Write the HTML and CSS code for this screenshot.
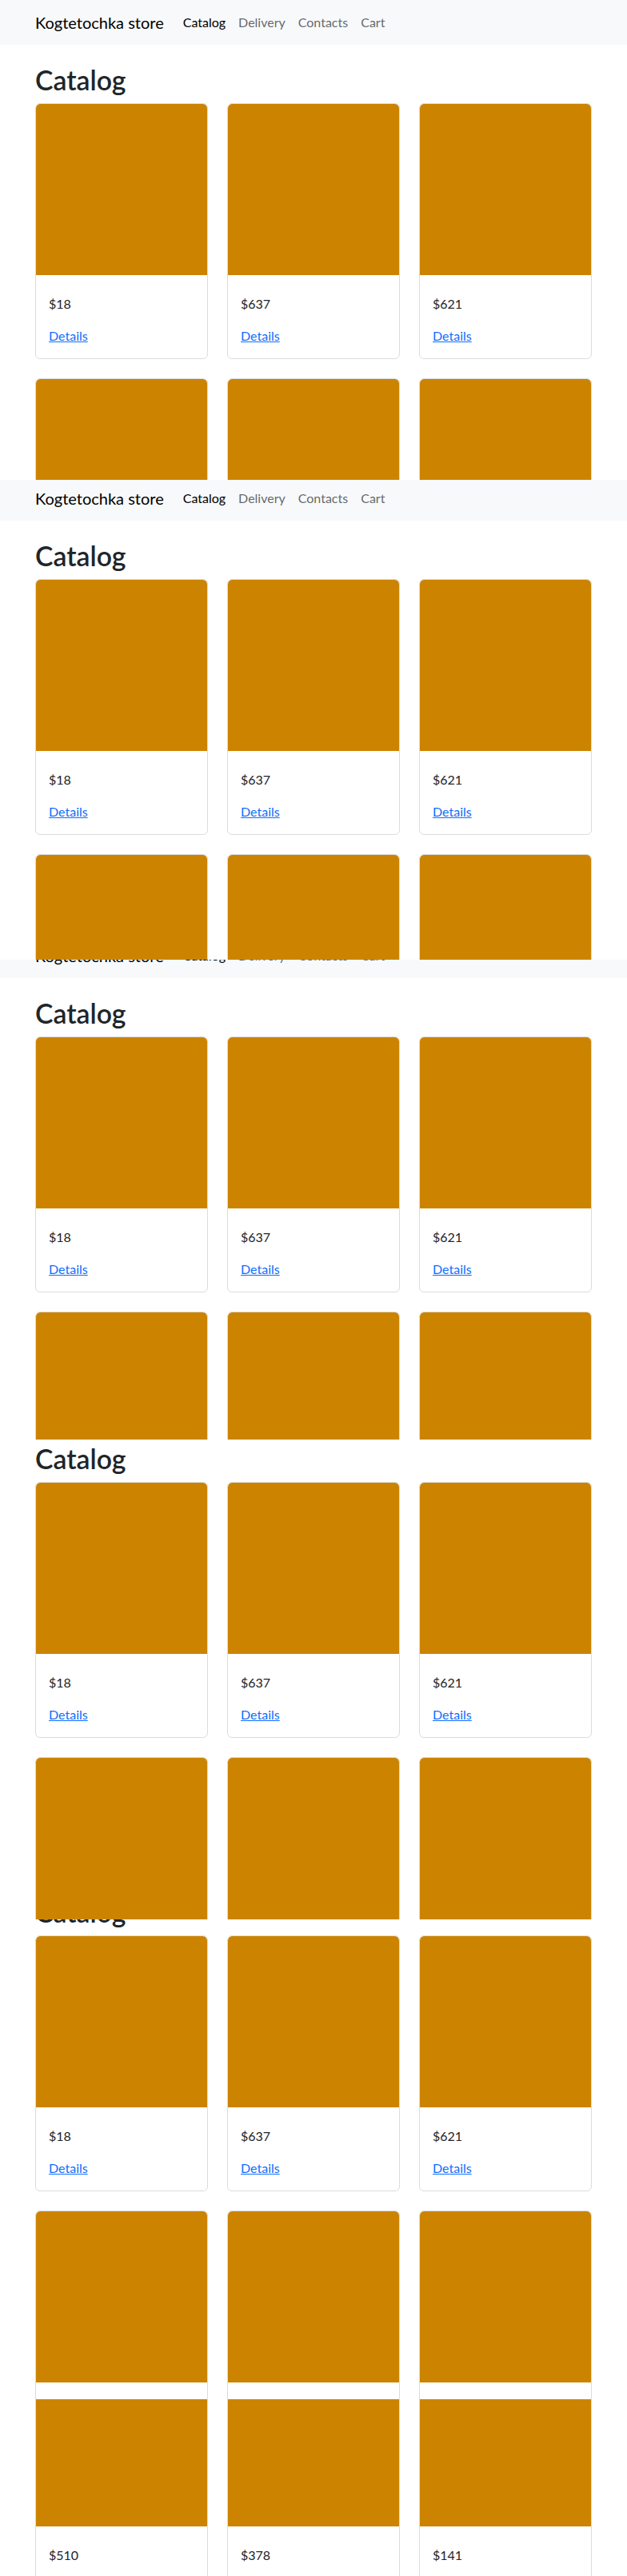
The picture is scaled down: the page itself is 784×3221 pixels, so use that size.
FILE: index.html
```html
<!DOCTYPE html>
<html lang="en">
<head>
<meta charset="utf-8">
<title>Kogtetochka store</title>
<link rel="stylesheet" href="styles.css">
</head>
<body>

<section class="tile">
  <div class="page scroll-0">
    <nav class="navbar"><div class="container nav-inner">
      <a class="brand" href="#">Kogtetochka store</a>
      <ul class="nav"><li><a class="nav-link active" href="#">Catalog</a></li><li><a class="nav-link" href="#">Delivery</a></li><li><a class="nav-link" href="#">Contacts</a></li><li><a class="nav-link" href="#">Cart</a></li></ul>
    </div></nav>
    <main class="container main">
      <h1 class="title">Catalog</h1>
      <div class="grid">
        <div class="card"><div class="card-img"></div><div class="card-body"><p class="price">$18</p><a class="details" href="#">Details</a></div></div>
        <div class="card"><div class="card-img"></div><div class="card-body"><p class="price">$637</p><a class="details" href="#">Details</a></div></div>
        <div class="card"><div class="card-img"></div><div class="card-body"><p class="price">$621</p><a class="details" href="#">Details</a></div></div>
        <div class="card"><div class="card-img"></div><div class="card-body"><p class="price">$510</p><a class="details" href="#">Details</a></div></div>
        <div class="card"><div class="card-img"></div><div class="card-body"><p class="price">$378</p><a class="details" href="#">Details</a></div></div>
        <div class="card"><div class="card-img"></div><div class="card-body"><p class="price">$141</p><a class="details" href="#">Details</a></div></div>
      </div>
    </main>
  </div>
</section>

<section class="tile">
  <div class="page scroll-1">
    <nav class="navbar"><div class="container nav-inner">
      <a class="brand" href="#">Kogtetochka store</a>
      <ul class="nav"><li><a class="nav-link active" href="#">Catalog</a></li><li><a class="nav-link" href="#">Delivery</a></li><li><a class="nav-link" href="#">Contacts</a></li><li><a class="nav-link" href="#">Cart</a></li></ul>
    </div></nav>
    <main class="container main">
      <h1 class="title">Catalog</h1>
      <div class="grid">
        <div class="card"><div class="card-img"></div><div class="card-body"><p class="price">$18</p><a class="details" href="#">Details</a></div></div>
        <div class="card"><div class="card-img"></div><div class="card-body"><p class="price">$637</p><a class="details" href="#">Details</a></div></div>
        <div class="card"><div class="card-img"></div><div class="card-body"><p class="price">$621</p><a class="details" href="#">Details</a></div></div>
        <div class="card"><div class="card-img"></div><div class="card-body"><p class="price">$510</p><a class="details" href="#">Details</a></div></div>
        <div class="card"><div class="card-img"></div><div class="card-body"><p class="price">$378</p><a class="details" href="#">Details</a></div></div>
        <div class="card"><div class="card-img"></div><div class="card-body"><p class="price">$141</p><a class="details" href="#">Details</a></div></div>
      </div>
    </main>
  </div>
</section>

<section class="tile">
  <div class="page scroll-2">
    <nav class="navbar"><div class="container nav-inner">
      <a class="brand" href="#">Kogtetochka store</a>
      <ul class="nav"><li><a class="nav-link active" href="#">Catalog</a></li><li><a class="nav-link" href="#">Delivery</a></li><li><a class="nav-link" href="#">Contacts</a></li><li><a class="nav-link" href="#">Cart</a></li></ul>
    </div></nav>
    <main class="container main">
      <h1 class="title">Catalog</h1>
      <div class="grid">
        <div class="card"><div class="card-img"></div><div class="card-body"><p class="price">$18</p><a class="details" href="#">Details</a></div></div>
        <div class="card"><div class="card-img"></div><div class="card-body"><p class="price">$637</p><a class="details" href="#">Details</a></div></div>
        <div class="card"><div class="card-img"></div><div class="card-body"><p class="price">$621</p><a class="details" href="#">Details</a></div></div>
        <div class="card"><div class="card-img"></div><div class="card-body"><p class="price">$510</p><a class="details" href="#">Details</a></div></div>
        <div class="card"><div class="card-img"></div><div class="card-body"><p class="price">$378</p><a class="details" href="#">Details</a></div></div>
        <div class="card"><div class="card-img"></div><div class="card-body"><p class="price">$141</p><a class="details" href="#">Details</a></div></div>
      </div>
    </main>
  </div>
</section>

<section class="tile">
  <div class="page scroll-3">
    <nav class="navbar"><div class="container nav-inner">
      <a class="brand" href="#">Kogtetochka store</a>
      <ul class="nav"><li><a class="nav-link active" href="#">Catalog</a></li><li><a class="nav-link" href="#">Delivery</a></li><li><a class="nav-link" href="#">Contacts</a></li><li><a class="nav-link" href="#">Cart</a></li></ul>
    </div></nav>
    <main class="container main">
      <h1 class="title">Catalog</h1>
      <div class="grid">
        <div class="card"><div class="card-img"></div><div class="card-body"><p class="price">$18</p><a class="details" href="#">Details</a></div></div>
        <div class="card"><div class="card-img"></div><div class="card-body"><p class="price">$637</p><a class="details" href="#">Details</a></div></div>
        <div class="card"><div class="card-img"></div><div class="card-body"><p class="price">$621</p><a class="details" href="#">Details</a></div></div>
        <div class="card"><div class="card-img"></div><div class="card-body"><p class="price">$510</p><a class="details" href="#">Details</a></div></div>
        <div class="card"><div class="card-img"></div><div class="card-body"><p class="price">$378</p><a class="details" href="#">Details</a></div></div>
        <div class="card"><div class="card-img"></div><div class="card-body"><p class="price">$141</p><a class="details" href="#">Details</a></div></div>
      </div>
    </main>
  </div>
</section>

<section class="tile">
  <div class="page scroll-4">
    <nav class="navbar"><div class="container nav-inner">
      <a class="brand" href="#">Kogtetochka store</a>
      <ul class="nav"><li><a class="nav-link active" href="#">Catalog</a></li><li><a class="nav-link" href="#">Delivery</a></li><li><a class="nav-link" href="#">Contacts</a></li><li><a class="nav-link" href="#">Cart</a></li></ul>
    </div></nav>
    <main class="container main">
      <h1 class="title">Catalog</h1>
      <div class="grid">
        <div class="card"><div class="card-img"></div><div class="card-body"><p class="price">$18</p><a class="details" href="#">Details</a></div></div>
        <div class="card"><div class="card-img"></div><div class="card-body"><p class="price">$637</p><a class="details" href="#">Details</a></div></div>
        <div class="card"><div class="card-img"></div><div class="card-body"><p class="price">$621</p><a class="details" href="#">Details</a></div></div>
        <div class="card"><div class="card-img"></div><div class="card-body"><p class="price">$510</p><a class="details" href="#">Details</a></div></div>
        <div class="card"><div class="card-img"></div><div class="card-body"><p class="price">$378</p><a class="details" href="#">Details</a></div></div>
        <div class="card"><div class="card-img"></div><div class="card-body"><p class="price">$141</p><a class="details" href="#">Details</a></div></div>
      </div>
    </main>
  </div>
</section>

<section class="tile tile-last">
  <div class="page scroll-5">
    <nav class="navbar"><div class="container nav-inner">
      <a class="brand" href="#">Kogtetochka store</a>
      <ul class="nav"><li><a class="nav-link active" href="#">Catalog</a></li><li><a class="nav-link" href="#">Delivery</a></li><li><a class="nav-link" href="#">Contacts</a></li><li><a class="nav-link" href="#">Cart</a></li></ul>
    </div></nav>
    <main class="container main">
      <h1 class="title">Catalog</h1>
      <div class="grid">
        <div class="card"><div class="card-img"></div><div class="card-body"><p class="price">$18</p><a class="details" href="#">Details</a></div></div>
        <div class="card"><div class="card-img"></div><div class="card-body"><p class="price">$637</p><a class="details" href="#">Details</a></div></div>
        <div class="card"><div class="card-img"></div><div class="card-body"><p class="price">$621</p><a class="details" href="#">Details</a></div></div>
        <div class="card"><div class="card-img"></div><div class="card-body"><p class="price">$510</p><a class="details" href="#">Details</a></div></div>
        <div class="card"><div class="card-img"></div><div class="card-body"><p class="price">$378</p><a class="details" href="#">Details</a></div></div>
        <div class="card"><div class="card-img"></div><div class="card-body"><p class="price">$141</p><a class="details" href="#">Details</a></div></div>
      </div>
    </main>
  </div>
</section>

</body>
</html>
```

FILE: styles.css
```css
* { box-sizing: border-box; }

html, body {
  margin: 0;
  padding: 0;
  background: #fff;
}

body {
  font-family: Lato, "Noto Sans", "Liberation Sans", sans-serif;
  font-size: 16px;
  line-height: 1.5;
  color: #212529;
}

/* each tile is one 600px-tall capture of the page at a scroll offset */
.tile {
  height: 600px;
  overflow: hidden;
}
.tile-last { height: 221px; }

.scroll-0 { margin-top: 0; }
.scroll-1 { margin-top: -5px; }
.scroll-2 { margin-top: -33px; }
.scroll-3 { margin-top: -76px; }
.scroll-4 { margin-top: -109px; }
.scroll-5 { margin-top: -529px; }

.container {
  max-width: 720px;
  margin: 0 auto;
  padding: 0 12px;
}

/* navbar */
.navbar {
  background: #f8f9fa;
  padding: 8px 0;
}
.nav-inner {
  display: flex;
  align-items: center;
}
.brand {
  font-size: 20px;
  line-height: 30px;
  padding: 5px 0;
  margin-right: 16px;
  color: #000;
  text-decoration: none;
}
.nav {
  display: flex;
  list-style: none;
  margin: 0;
  padding: 0;
}
.nav-link {
  display: block;
  padding: 8px;
  color: rgba(33, 37, 41, 0.7);
  text-decoration: none;
}
.nav-link.active { color: #000; }

/* main */
.main { margin-top: 24px; }
.title {
  margin: 0 0 8px;
  font-size: 33.76px;
  font-weight: 600;
  line-height: 1.2;
  color: #212529;
}

.grid {
  display: grid;
  grid-template-columns: repeat(3, 1fr);
  gap: 24px;
}

.card {
  border: 1px solid #dcdcdc;
  border-radius: 6px;
  background: #fff;
  overflow: hidden;
}
.card-img {
  width: 100%;
  aspect-ratio: 1 / 1;
  background: #cc8400;
  border-radius: 5px 5px 0 0;
}
.card-body {
  padding: 24px 16px 16px;
}
.price {
  margin: 0 0 16px;
}
.details {
  color: #0d6efd;
  text-decoration: underline;
}
```
